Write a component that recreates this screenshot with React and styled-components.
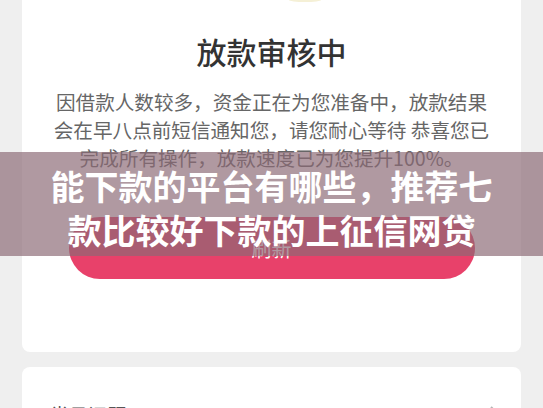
import React from "react";
import styled, { createGlobalStyle } from "styled-components";

const GlobalStyle = createGlobalStyle`
  html, body {
    margin: 0;
    padding: 0;
    background: #efefef;
    font-family: "Noto Sans CJK SC", "Noto Sans", sans-serif;
  }
`;

function App() {
  return (
    <Page>
      <GlobalStyle />
      <Card>
        <Illustration viewBox="0 0 36 3" width="36" height="3">
          <ellipse cx="18" cy="0" rx="16" ry="2" fill="#f5f0d6" />
        </Illustration>
        <Title>放款审核中</Title>
        <Message>
          因借款人数较多，资金正在为您准备中，放款结果
          <br />
          会在早八点前短信通知您，请您耐心等待 恭喜您已
          <br />
          完成所有操作，放款速度已为您提升100%。
        </Message>
        <RefreshButton>刷新</RefreshButton>
      </Card>
      <Card $faq>
        <FaqRow>
          <FaqLabel>常见问题</FaqLabel>
          <Chevron viewBox="0 0 12 20" width="12" height="20">
            <path d="M2 2 L10 10 L2 18" fill="none" stroke="#b5b5b5" strokeWidth="2" />
          </Chevron>
        </FaqRow>
      </Card>
      <Banner>
        能下款的平台有哪些，推荐七
        <br />
        款比较好下款的上征信网贷
      </Banner>
    </Page>
  );
}

export default App;

const Page = styled.div`
  position: relative;
  width: 543px;
  height: 408px;
  overflow: hidden;
  padding: 0 22px;
  box-sizing: border-box;
  display: flex;
  flex-direction: column;
  gap: 15px;
`;

const Card = styled.div`
  background: #fff;
  border-radius: ${(p) => (p.$faq ? "8px" : "0 0 8px 8px")};
  display: flex;
  flex-direction: column;
  align-items: ${(p) => (p.$faq ? "stretch" : "center")};
  padding: ${(p) => (p.$faq ? "35px 20px 20px 28px" : "0 0 73px")};
  flex-shrink: 0;
`;

const Illustration = styled.svg`
  display: block;
  margin-left: 66px;
`;

const Title = styled.h1`
  margin: 30px 0 0;
  font-size: 30px;
  line-height: 36px;
  font-weight: 500;
  color: #333;
`;

const Message = styled.p`
  margin: 19px 0 0;
  font-size: 19.6px;
  line-height: 28px;
  color: #666;
  text-align: center;
  white-space: nowrap;
`;

const RefreshButton = styled.button`
  margin-top: 45px;
  width: 406px;
  height: 62px;
  border: none;
  border-radius: 31px;
  background: #e8416a;
  color: #fff;
  font-family: inherit;
  font-size: 20px;
  padding: 0;
`;

const FaqRow = styled.div`
  display: flex;
  align-items: center;
  justify-content: space-between;
`;

const FaqLabel = styled.span`
  font-size: 19px;
  line-height: 26px;
  color: #555;
`;

const Chevron = styled.svg`
  display: block;
`;

const Banner = styled.div`
  position: absolute;
  left: 0;
  right: 0;
  top: 152px;
  height: 104px;
  box-sizing: border-box;
  padding-top: 12px;
  background: rgba(138, 104, 117, 0.68);
  color: #fff;
  font-size: 34px;
  line-height: 44px;
  font-weight: 700;
  text-align: center;
`;
